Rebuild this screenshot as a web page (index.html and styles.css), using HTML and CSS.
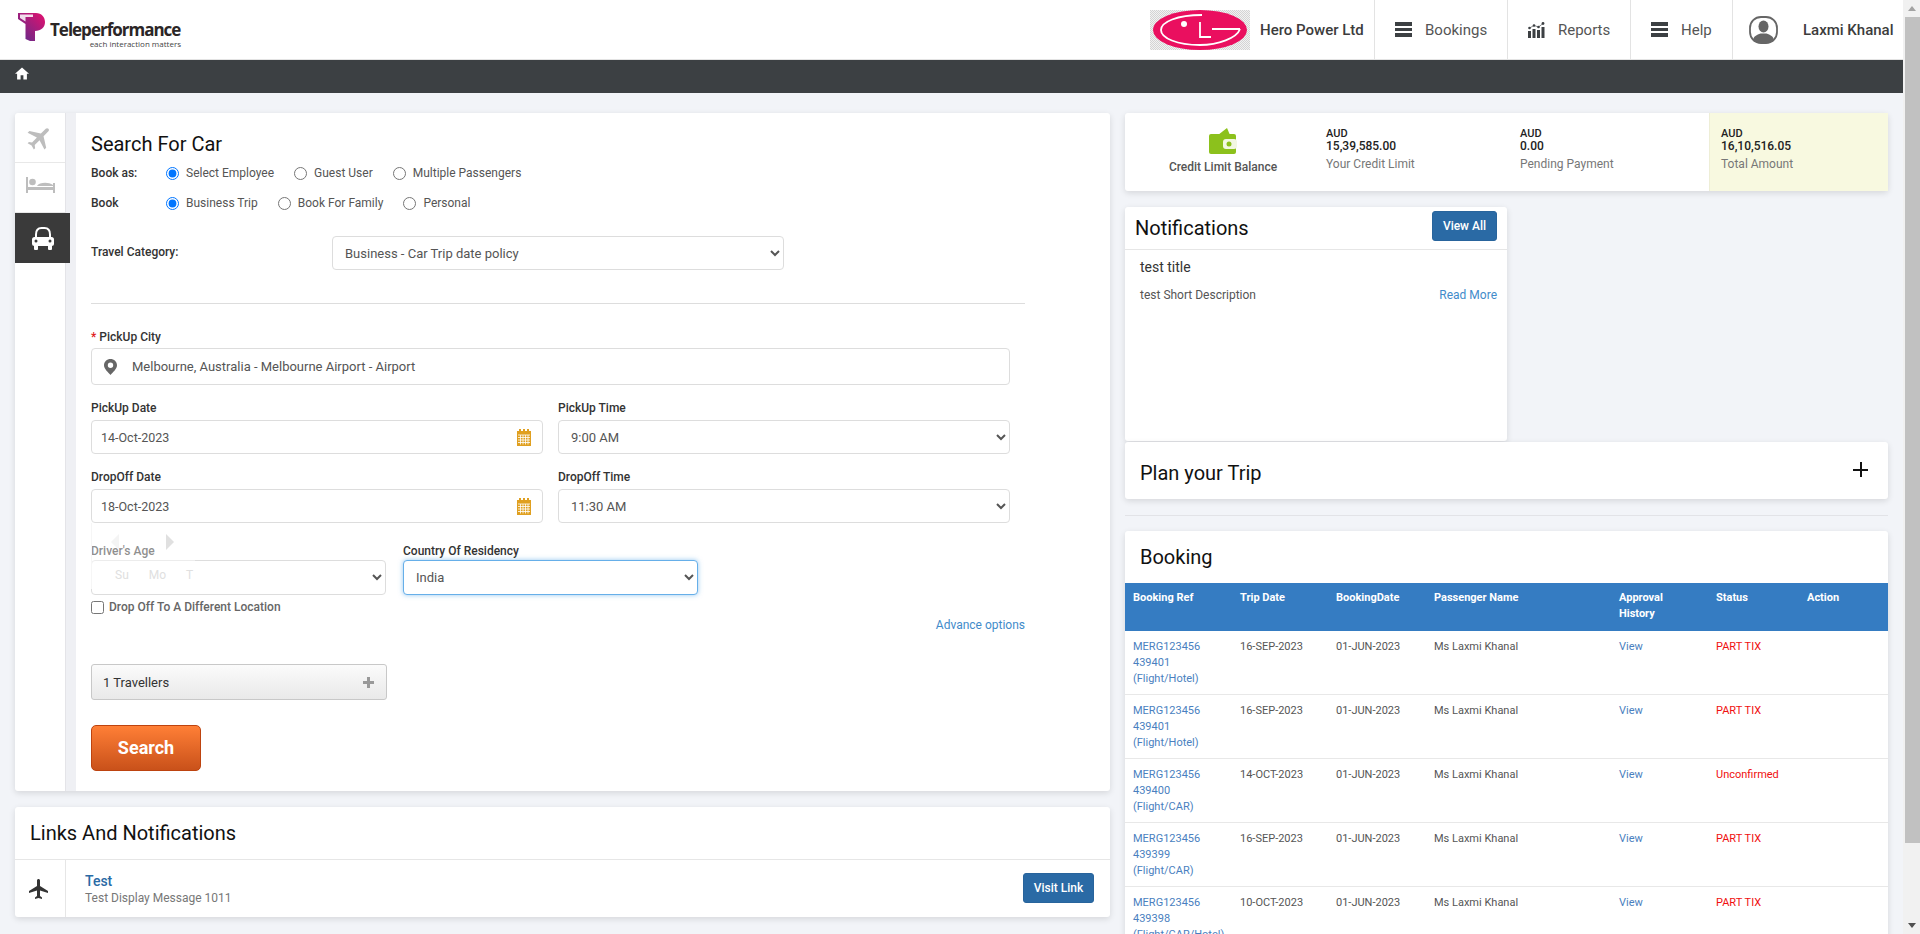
FILE: index.html
```html
<!DOCTYPE html>
<html lang="en">
<head>
    <meta charset="UTF-8">
    <title>Search For Car</title>
    <link rel="stylesheet" href="styles.css">
</head>
<body>
<div class="page">

    <header class="topbar">
        <div class="logo">
            <svg class="logo-mark" width="27" height="28" viewBox="0 0 27 28">
                <defs>
                    <linearGradient id="tpGrad" x1="0" y1="1" x2="1" y2="0">
                        <stop offset="0" stop-color="#5a2d8c"/>
                        <stop offset="1" stop-color="#e5106e"/>
                    </linearGradient>
                </defs>
                <path fill="url(#tpGrad)" d="M0 0H18C23.500 0 27 4 27 9C27 14.500 23 18 17 18V28H12L7.500 26V11L0 6Z"/>
                <path fill="#fff" d="M2 1.500H15V4H7.500V8.500L2 5Z" opacity="0.85"/>
            </svg>
            <div class="logo-text">
                <div class="logo-name">Teleperformance</div>
                <div class="logo-tag">each interaction matters</div>
            </div>
        </div>
        <div class="company">
            <svg class="lg-logo" width="100" height="40" viewBox="0 0 100 40">
                <defs>
                    <pattern id="dither" width="2" height="2" patternUnits="userSpaceOnUse">
                        <rect width="2" height="2" fill="#f2f2f2"/>
                        <rect width="1" height="1" fill="#d4d4d4"/>
                        <rect x="1" y="1" width="1" height="1" fill="#d4d4d4"/>
                    </pattern>
                </defs>
                <rect width="100" height="40" fill="url(#dither)"/>
                <ellipse cx="50" cy="20" rx="47" ry="20" fill="#ea0f5f"/>
                <path d="M90 19C87 28 68 35 50 35C27 35 11 28 11 20C11 12 27 5 52 5" fill="none" stroke="#fff" stroke-width="1.800"/>
                <circle cx="34" cy="14" r="3" fill="#fff"/>
                <path d="M50 12V27H61M62 19H90" fill="none" stroke="#fff" stroke-width="1.800"/>
            </svg>
            <span class="company-name">Hero Power Ltd</span>
        </div>
        <a class="nav-cell nav-bookings">
            <span class="bars"><i></i><i></i><i></i></span>
            <span>Bookings</span>
        </a>
        <a class="nav-cell nav-reports">
            <svg width="17" height="16" viewBox="0 0 17 16" fill="#3c4043">
                <rect x="0" y="9" width="3" height="7"/>
                <rect x="4.500" y="7" width="3" height="9"/>
                <rect x="9" y="8" width="3" height="8"/>
                <rect x="13.500" y="5" width="3" height="11"/>
                <circle cx="1.500" cy="6" r="1.300"/>
                <circle cx="6" cy="3.500" r="1.300"/>
                <circle cx="10.500" cy="5" r="1.300"/>
                <circle cx="15" cy="1.500" r="1.400"/>
                <path d="M1.500 6L6 3.500L10.500 5L15 1.500" fill="none" stroke="#3c4043" stroke-width="0.600"/>
            </svg>
            <span>Reports</span>
        </a>
        <a class="nav-cell nav-help">
            <span class="bars"><i></i><i></i><i></i></span>
            <span>Help</span>
        </a>
        <div class="user">
            <svg width="29" height="28" viewBox="0 0 29 28">
                <rect x="1" y="1" width="27" height="26" rx="11" fill="#fff" stroke="#666" stroke-width="1.800"/>
                <ellipse cx="14.500" cy="10.500" rx="5" ry="6" fill="#666"/>
                <path d="M4 25C4 20 8 19 11.500 17.500H17.500C21 19 25 20 25 25C21 27 8 27 4 25Z" fill="#666"/>
            </svg>
            <span class="user-name">Laxmi Khanal</span>
        </div>
    </header>

    <div class="crumbbar">
        <svg class="home-icon" width="14" height="13" viewBox="2 3 20 17" fill="#fff">
            <path d="M10 20v-6h4v6h5v-8h3L12 3 2 12h3v8z"/>
        </svg>
    </div>

    <main class="main">
        <div class="col-left">
            <section class="card search-card">
                <nav class="tabs">
                    <div class="tab">
                        <svg width="30" height="30" viewBox="0 0 24 24" fill="#bdbdbd">
                            <path transform="rotate(45 12 12)" d="M21 16v-2l-8-5V3.500c0-.83-.67-1.500-1.500-1.500S10 2.670 10 3.500V9l-8 5v2l8-2.500V19l-2 1.500V22l3.500-1 3.500 1v-1.500L13 19v-5.500l8 2.500z"/>
                        </svg>
                    </div>
                    <div class="tab tab-bed">
                        <svg width="29" height="16" viewBox="0 0 29 16" fill="#bdbdbd">
                            <rect x="0" y="0" width="2" height="16"/>
                            <rect x="27" y="6" width="2" height="10"/>
                            <rect x="0" y="10" width="29" height="3"/>
                            <circle cx="6.500" cy="5" r="3.300"/>
                            <path d="M11 9C13 5.500 22 4.500 27 8V9Z"/>
                        </svg>
                    </div>
                    <div class="tab tab-active">
                        <svg width="22" height="23" viewBox="0 0 22 23">
                            <path d="M4 11V7.500C4 3.500 6 1 9.500 1H12.500C16 1 18 3.500 18 7.500V11" fill="none" stroke="#fff" stroke-width="2"/>
                            <rect x="0" y="10" width="22" height="9" rx="2.500" fill="#fff"/>
                            <rect x="2" y="18" width="4" height="5" rx="1" fill="#fff"/>
                            <rect x="16" y="18" width="4" height="5" rx="1" fill="#fff"/>
                            <circle cx="4" cy="14" r="1.500" fill="#3a3a3a"/>
                            <circle cx="18" cy="14" r="1.500" fill="#3a3a3a"/>
                        </svg>
                    </div>
                </nav>
                <div class="tab-gutter"></div>

                <div class="search-form">
                    <h2 class="form-title">Search For Car</h2>

                    <div class="radio-row radio-row-first">
                        <span class="radio-label">Book as:</span>
                        <label class="radio radio-employee"><input type="radio" name="bookas" checked>Select Employee</label>
                        <label class="radio radio-guest"><input type="radio" name="bookas">Guest User</label>
                        <label class="radio"><input type="radio" name="bookas">Multiple Passengers</label>
                    </div>
                    <div class="radio-row">
                        <span class="radio-label">Book</span>
                        <label class="radio radio-trip"><input type="radio" name="book" checked>Business Trip</label>
                        <label class="radio radio-family"><input type="radio" name="book">Book For Family</label>
                        <label class="radio"><input type="radio" name="book">Personal</label>
                    </div>

                    <div class="category-row">
                        <span class="category-label">Travel Category:</span>
                        <select class="field category-select">
                            <option>Business - Car Trip date policy</option>
                        </select>
                    </div>

                    <hr class="form-rule">

                    <label class="field-label city-label"><span class="required">*</span> PickUp City</label>
                    <div class="field city-field">
                        <svg width="13" height="16" viewBox="0 0 13 16">
                            <path fill="#666" fill-rule="evenodd" d="M6.500 0C3 0 0 2.700 0 6.200C0 10 4.500 13.500 6.500 16C8.500 13.500 13 10 13 6.200C13 2.700 10 0 6.500 0ZM6.500 3.500A2.700 2.700 0 1 1 6.500 8.900A2.700 2.700 0 1 1 6.500 3.500Z"/>
                        </svg>
                        <span>Melbourne, Australia - Melbourne Airport - Airport</span>
                    </div>

                    <div class="date-grid">
                        <div>
                            <label class="field-label">PickUp Date</label>
                            <div class="field date-field">
                                <span>14-Oct-2023</span>
                                <svg width="14" height="17" viewBox="0 0 14 17">
                                    <path fill="#e0a020" d="M0 2H2V0H4V2H6V0H8V2H10V0H12V2H14V17H0Z"/>
                                    <path stroke="#fff" stroke-width="0.800" d="M1 6H13M1 8.500H13M1 11H13M1 13.500H13M3.500 6V15.500M6 6V15.500M8.500 6V15.500M11 6V15.500"/>
                                </svg>
                            </div>
                        </div>
                        <div>
                            <label class="field-label">PickUp Time</label>
                            <select class="field time-select"><option>9:00 AM</option></select>
                        </div>
                    </div>

                    <div class="date-grid date-grid-second">
                        <div>
                            <label class="field-label">DropOff Date</label>
                            <div class="field date-field">
                                <span>18-Oct-2023</span>
                                <svg width="14" height="17" viewBox="0 0 14 17">
                                    <path fill="#e0a020" d="M0 2H2V0H4V2H6V0H8V2H10V0H12V2H14V17H0Z"/>
                                    <path stroke="#fff" stroke-width="0.800" d="M1 6H13M1 8.500H13M1 11H13M1 13.500H13M3.500 6V15.500M6 6V15.500M8.500 6V15.500M11 6V15.500"/>
                                </svg>
                            </div>
                        </div>
                        <div>
                            <label class="field-label">DropOff Time</label>
                            <select class="field time-select"><option>11:30 AM</option></select>
                        </div>
                    </div>

                    <div class="driver-grid">
                        <div>
                            <label class="field-label">Driver's Age</label>
                            <select class="field driver-select"><option></option></select>
                        </div>
                        <div>
                            <label class="field-label">Country Of Residency</label>
                            <select class="field driver-select country-select"><option>India</option></select>
                        </div>
                    </div>

                    <!-- datepicker fading out over the driver's age field -->
                    <div class="ghost-picker">
                        <span class="ghost-arrow ghost-prev"></span>
                        <span class="ghost-arrow ghost-next"></span>
                        <div class="ghost-days"><span>Su</span><span>Mo</span><span>T</span></div>
                    </div>

                    <label class="check-row"><input type="checkbox">Drop Off To A Different Location</label>
                    <div class="advance"><a>Advance options</a></div>

                    <div class="travellers">
                        <span>1 Travellers</span>
                        <span class="travellers-plus"></span>
                    </div>
                    <button class="search-btn">Search</button>
                </div>
            </section>

            <section class="card links-card">
                <h2 class="links-title">Links And Notifications</h2>
                <div class="links-row">
                    <div class="links-icon">
                        <svg width="24" height="24" viewBox="0 0 24 24" fill="#333">
                            <path d="M21 16v-2l-8-5V3.500c0-.83-.67-1.500-1.500-1.500S10 2.670 10 3.500V9l-8 5v2l8-2.500V19l-2 1.500V22l3.500-1 3.500 1v-1.500L13 19v-5.500l8 2.500z"/>
                        </svg>
                    </div>
                    <div class="links-body">
                        <a class="links-name">Test</a>
                        <div class="links-sub">Test Display Message 1011</div>
                    </div>
                    <button class="btn-blue visit-btn">Visit Link</button>
                </div>
            </section>
        </div>

        <div class="col-right">
            <section class="card balance-card">
                <div class="balance-head">
                    <svg width="28" height="26" viewBox="0 0 28 26">
                        <path fill="#8cc11c" d="M9 7L18 0L21 7Z"/>
                        <rect x="0" y="6" width="27" height="20" rx="2" fill="#8cc11c"/>
                        <rect x="14" y="11" width="14" height="10" rx="3" fill="#f2f7e2"/>
                        <circle cx="20" cy="16" r="2.500" fill="#8cc11c"/>
                    </svg>
                    <span class="balance-title">Credit Limit Balance</span>
                </div>
                <div class="balance-item balance-limit">
                    <div class="currency">AUD</div>
                    <div class="amount">15,39,585.00</div>
                    <div class="amount-label">Your Credit Limit</div>
                </div>
                <div class="balance-item balance-pending">
                    <div class="currency">AUD</div>
                    <div class="amount">0.00</div>
                    <div class="amount-label">Pending Payment</div>
                </div>
                <div class="balance-item balance-total">
                    <div class="currency">AUD</div>
                    <div class="amount">16,10,516.05</div>
                    <div class="amount-label">Total Amount</div>
                </div>
            </section>

            <section class="card notice-card">
                <div class="notice-head">
                    <h2 class="notice-title">Notifications</h2>
                    <button class="btn-blue viewall-btn">View All</button>
                </div>
                <div class="notice-body">
                    <div class="notice-name">test title</div>
                    <div class="notice-line">
                        <span>test Short Description</span>
                        <a>Read More</a>
                    </div>
                </div>
            </section>

            <section class="card plan-card">
                <h2 class="plan-title">Plan your Trip</h2>
                <span class="plan-plus"></span>
            </section>

            <hr class="col-rule">

            <section class="card booking-card">
                <h2 class="booking-title">Booking</h2>
                <table class="booking-table">
                    <colgroup>
                        <col class="c-ref"><col class="c-trip"><col class="c-date"><col class="c-name"><col class="c-view"><col class="c-status"><col>
                    </colgroup>
                    <thead>
                        <tr>
                            <th>Booking Ref</th><th>Trip Date</th><th>BookingDate</th><th>Passenger Name</th><th>Approval History</th><th>Status</th><th>Action</th>
                        </tr>
                    </thead>
                    <tbody>
                        <tr>
                            <td><a>MERG123456<br>439401<br>(Flight/Hotel)</a></td><td>16-SEP-2023</td><td>01-JUN-2023</td><td>Ms Laxmi Khanal</td><td><a>View</a></td><td class="status">PART TIX</td><td></td>
                        </tr>
                        <tr>
                            <td><a>MERG123456<br>439401<br>(Flight/Hotel)</a></td><td>16-SEP-2023</td><td>01-JUN-2023</td><td>Ms Laxmi Khanal</td><td><a>View</a></td><td class="status">PART TIX</td><td></td>
                        </tr>
                        <tr>
                            <td><a>MERG123456<br>439400<br>(Flight/CAR)</a></td><td>14-OCT-2023</td><td>01-JUN-2023</td><td>Ms Laxmi Khanal</td><td><a>View</a></td><td class="status">Unconfirmed</td><td></td>
                        </tr>
                        <tr>
                            <td><a>MERG123456<br>439399<br>(Flight/CAR)</a></td><td>16-SEP-2023</td><td>01-JUN-2023</td><td>Ms Laxmi Khanal</td><td><a>View</a></td><td class="status">PART TIX</td><td></td>
                        </tr>
                        <tr>
                            <td><a>MERG123456<br>439398<br>(Flight/CAR/Hotel)</a></td><td>10-OCT-2023</td><td>01-JUN-2023</td><td>Ms Laxmi Khanal</td><td><a>View</a></td><td class="status">PART TIX</td><td></td>
                        </tr>
                    </tbody>
                </table>
            </section>
        </div>
    </main>
</div>

<div class="scrollbar">
    <span class="scroll-up"></span>
    <div class="scroll-thumb"></div>
    <span class="scroll-down"></span>
</div>
</body>
</html>
```

FILE: styles.css
```css
* {
    box-sizing: border-box;
}

html, body {
    margin: 0;
    height: 934px;
    overflow: hidden;
}

body {
    display: flex;
    font-family: Roboto, sans-serif;
    font-size: 12px;
    color: #555;
    background: #f2f4f8;
}

.page {
    width: 1903px;
    height: 934px;
    overflow: hidden;
}

/* top bar */
.topbar {
    display: flex;
    align-items: center;
    height: 60px;
    background: #fff;
    border-bottom: 1px solid #e3e3e3;
}

.logo {
    display: flex;
    align-items: flex-start;
    width: 1150px;
    height: 59px;
    padding: 13px 0 0 18px;
}

.logo-mark {
    flex: none;
}

.logo-text {
    margin: 8px 0 0 5px;
    width: 131px;
}

.logo-name {
    font-family: "Open Sans", sans-serif;
    font-weight: 700;
    font-size: 17px;
    line-height: 17px;
    letter-spacing: -1px;
    color: #2b2626;
    white-space: nowrap;
}

.logo-tag {
    margin-top: 1px;
    font-family: "Open Sans", sans-serif;
    font-size: 8px;
    line-height: 9px;
    text-align: right;
    color: #444;
    white-space: nowrap;
}

.company {
    display: flex;
    align-items: center;
    width: 224px;
}

.company-name {
    margin-left: 10px;
    font-size: 15px;
    font-weight: 500;
    color: #3c3c3c;
    white-space: nowrap;
}

.nav-cell {
    display: flex;
    align-items: center;
    height: 59px;
    gap: 13px;
    border-left: 1px solid #e3e3e3;
    font-size: 15px;
    color: #555;
}

.nav-bookings {
    width: 133px;
    padding-left: 20px;
}

.nav-reports {
    width: 123px;
    padding-left: 20px;
}

.nav-help {
    width: 102px;
    padding-left: 20px;
}

.bars {
    display: flex;
    flex-direction: column;
    gap: 2px;
    width: 17px;
}

.bars i {
    display: block;
    height: 3.500px;
    background: #3c4043;
}

.user {
    display: flex;
    align-items: center;
    flex: 1;
    height: 59px;
    padding-left: 16px;
    border-left: 1px solid #e3e3e3;
}

.user-name {
    margin-left: 25px;
    font-size: 15px;
    font-weight: 500;
    color: #3c3c3c;
    white-space: nowrap;
}

.crumbbar {
    display: flex;
    align-items: center;
    height: 33px;
    padding: 0 0 6px 15px;
    background: #3c4043;
}

/* columns */
.main {
    display: flex;
    gap: 15px;
    padding: 20px 15px 0;
}

.col-left {
    flex: none;
    width: 1095px;
}

.col-right {
    flex: none;
    width: 763px;
}

.card {
    background: #fff;
    border-radius: 3px;
    box-shadow: 0 2px 6px rgba(0, 0, 0, 0.12);
}

/* search card */
.search-card {
    display: flex;
    height: 678px;
}

.tabs {
    flex: none;
    width: 50px;
}

.tab {
    display: flex;
    align-items: center;
    justify-content: center;
    height: 50px;
    border-bottom: 1px solid #e8e8e8;
}

.tab-bed {
    padding-bottom: 6px;
}

.tab-active {
    width: 55px;
    background: #3a3a3a;
    border-bottom: none;
    position: relative;
}

.tab-gutter {
    flex: none;
    width: 11px;
    background: #eff0f4;
    border-left: 1px solid #e4e4e8;
}

.search-form {
    position: relative;
    flex: 1;
    padding: 19px 0 0 15px;
}

.form-title {
    margin: 0;
    font-size: 20px;
    font-weight: 400;
    line-height: 24px;
    color: #111;
}

.radio-row {
    display: flex;
    align-items: center;
    height: 20px;
    margin-top: 10px;
}

.radio-row-first {
    margin-top: 7px;
}

.radio-label {
    width: 75px;
    font-weight: 500;
    color: #333;
}

.radio {
    display: flex;
    align-items: center;
    margin-right: 20px;
}

.radio input {
    width: 13px;
    height: 13px;
    margin: 0 7px 0 0;
}

.category-row {
    display: flex;
    align-items: center;
    margin-top: 23px;
}

.category-label {
    width: 241px;
    font-weight: 500;
    color: #333;
    margin-top: -3px;
}

.field {
    display: block;
    border: 1px solid #ddd;
    border-radius: 4px;
    background: #fff;
    font-family: Roboto, sans-serif;
    font-size: 13px;
    color: #555;
}

select.field {
    padding: 0 8px;
    outline: none;
}

.category-select {
    width: 452px;
    height: 34px;
}

.form-rule {
    width: 934px;
    height: 1px;
    margin: 33px 0 0;
    border: none;
    background: #ddd;
}

.field-label {
    display: block;
    font-weight: 500;
    line-height: 14px;
    color: #333;
}

.city-label {
    margin-top: 26px;
}

.required {
    color: #e02020;
}

.city-field {
    display: flex;
    align-items: center;
    gap: 15px;
    width: 919px;
    height: 37px;
    margin-top: 4px;
    padding-left: 12px;
}

.date-grid {
    display: grid;
    grid-template-columns: 452px 452px;
    gap: 15px;
    margin-top: 16px;
}

.date-grid-second {
    margin-top: 16px;
}

.date-field {
    display: flex;
    align-items: center;
    justify-content: space-between;
    height: 34px;
    margin-top: 5px;
    padding: 0 11px 0 9px;
    font-size: 12.500px;
}

.time-select {
    width: 100%;
    height: 34px;
    margin-top: 5px;
}

.driver-grid {
    display: grid;
    grid-template-columns: 295px 295px;
    gap: 17px;
    margin-top: 21px;
}

.driver-select {
    width: 100%;
    height: 35px;
    margin-top: 2px;
}

.country-select {
    border-color: #66afe9;
    box-shadow: 0 0 5px rgba(102, 175, 233, 0.7);
}

.ghost-picker {
    position: absolute;
    left: 15px;
    top: 410px;
    width: 104px;
    height: 66px;
    background: rgba(255, 255, 255, 0.45);
    border-left: 1px solid #f6f6f6;
}

.ghost-arrow {
    position: absolute;
    top: 11px;
    width: 0;
    height: 0;
    border-top: 8px solid transparent;
    border-bottom: 8px solid transparent;
}

.ghost-prev {
    left: 19px;
    border-right: 8px solid #f4f4f4;
}

.ghost-next {
    left: 74px;
    border-left: 8px solid #e0e0e0;
}

.ghost-days {
    position: absolute;
    top: 45px;
    left: 23px;
    display: flex;
    gap: 20px;
    font-size: 12px;
    line-height: 14px;
    color: #e0e0e0;
}

.check-row {
    display: flex;
    align-items: center;
    height: 14px;
    margin-top: 5px;
    font-weight: 500;
    color: #666;
}

.check-row input {
    width: 13px;
    height: 13px;
    margin: 0 5px 0 0;
}

.advance {
    width: 934px;
    margin-top: 4px;
    line-height: 14px;
    text-align: right;
}

a {
    color: #428bca;
}

.travellers {
    display: flex;
    align-items: center;
    justify-content: space-between;
    width: 296px;
    height: 36px;
    margin-top: 32px;
    padding: 0 12px 0 11px;
    border: 1px solid #c8c8c8;
    border-radius: 3px;
    background: linear-gradient(#fbfbfb, #e9e9e9);
    font-size: 13px;
    color: #333;
}

.travellers-plus {
    position: relative;
    width: 11px;
    height: 11px;
    background: linear-gradient(#999, #999) center / 11px 3px no-repeat,
                linear-gradient(#999, #999) center / 3px 11px no-repeat;
}

.search-btn {
    display: block;
    width: 110px;
    height: 46px;
    margin-top: 25px;
    padding-bottom: 2px;
    border: 1px solid #bd430f;
    border-radius: 5px;
    background: linear-gradient(#ff7f36, #c9511a);
    font-family: Roboto, sans-serif;
    font-size: 18px;
    font-weight: 700;
    color: #fff;
}

/* links card */
.links-card {
    height: 110px;
    margin-top: 16px;
}

.links-title {
    height: 53px;
    margin: 0;
    padding-left: 15px;
    border-bottom: 1px solid #e6e6e6;
    font-size: 20px;
    font-weight: 400;
    line-height: 52px;
    color: #111;
}

.links-row {
    display: flex;
    align-items: center;
    height: 57px;
}

.links-icon {
    display: flex;
    align-items: center;
    justify-content: center;
    width: 51px;
    height: 57px;
    padding-right: 2px;
    border-right: 1px solid #e6e6e6;
}

.links-body {
    flex: 1;
    padding-left: 19px;
}

.links-name {
    display: block;
    font-size: 14px;
    font-weight: 500;
    line-height: 18px;
    color: #2a6aa5;
}

.links-sub {
    font-size: 12px;
    line-height: 16px;
    color: #777;
}

.btn-blue {
    border: 1px solid #28649c;
    border-radius: 3px;
    background: #2a6aa5;
    font-family: Roboto, sans-serif;
    font-size: 12px;
    font-weight: 500;
    color: #fff;
}

.visit-btn {
    width: 71px;
    height: 30px;
    margin-right: 16px;
    position: relative;
    top: -1px;
}

/* balance card */
.balance-card {
    display: flex;
    height: 78px;
}

.balance-head {
    display: flex;
    flex-direction: column;
    align-items: center;
    width: 196px;
    padding: 15px 0 0 0;
}

.balance-title {
    margin-top: 6px;
    font-weight: 500;
    color: #555;
    line-height: 14px;
}

.balance-item {
    padding-top: 15px;
}

.balance-limit {
    width: 199px;
    padding-left: 5px;
}

.balance-pending {
    width: 189px;
}

.balance-total {
    flex: 1;
    padding-left: 11px;
    background: #f8f9e0;
    border-left: 1px solid #eeeed6;
}

.currency {
    font-size: 11px;
    font-weight: 500;
    line-height: 12px;
    color: #222;
}

.amount {
    font-size: 12px;
    font-weight: 500;
    line-height: 12px;
    color: #222;
}

.amount-label {
    margin-top: 5px;
    font-size: 12px;
    line-height: 14px;
    color: #777;
}

/* notifications card */
.notice-card {
    width: 382px;
    height: 234px;
    margin-top: 16px;
}

.notice-head {
    display: flex;
    align-items: flex-start;
    justify-content: space-between;
    height: 43px;
    padding: 4px 10px 0 10px;
    border-bottom: 1px solid #e6e6e6;
}

.notice-title {
    margin: 5px 0 0;
    font-size: 20px;
    font-weight: 400;
    line-height: 24px;
    color: #111;
}

.viewall-btn {
    width: 65px;
    height: 30px;
}

.notice-body {
    padding: 8px 10px 0 15px;
}

.notice-name {
    font-size: 14px;
    line-height: 18px;
    color: #333;
}

.notice-line {
    display: flex;
    justify-content: space-between;
    margin-top: 12px;
    line-height: 14px;
}

.plan-card {
    display: flex;
    justify-content: space-between;
    height: 57px;
    margin-top: 1px;
    padding: 0 20px 0 15px;
}

.plan-title {
    margin: 19px 0 0;
    font-size: 20px;
    font-weight: 400;
    line-height: 24px;
    color: #111;
}

.plan-plus {
    width: 15px;
    height: 15px;
    margin-top: 20px;
    background: linear-gradient(#111, #111) center / 15px 2px no-repeat,
                linear-gradient(#111, #111) center / 2px 15px no-repeat;
}

.col-rule {
    height: 1px;
    margin: 16px 0 15px;
    border: none;
    background: #e2e3e7;
}

/* booking table */
.booking-title {
    height: 52px;
    margin: 0;
    padding-left: 15px;
    font-size: 20px;
    font-weight: 400;
    line-height: 52px;
    color: #111;
}

.booking-table {
    width: 100%;
    table-layout: fixed;
    border-collapse: collapse;
}

.c-ref { width: 107px; }
.c-trip { width: 96px; }
.c-date { width: 98px; }
.c-name { width: 185px; }
.c-view { width: 97px; }
.c-status { width: 91px; }

.booking-table th {
    height: 48px;
    padding: 7px 8px 0;
    vertical-align: top;
    background: #357cc2;
    font-size: 11px;
    font-weight: 700;
    line-height: 16px;
    text-align: left;
    color: #fff;
}

.booking-table td {
    padding: 8px 8px 7px;
    vertical-align: top;
    border-bottom: 1px solid #e8e8e8;
    font-size: 11px;
    line-height: 16px;
    color: #555;
}

.booking-table td a {
    color: #4a7fc0;
}

.booking-table td.status {
    color: #f01010;
}

/* scrollbar, page itself is fixed to the window */
.scrollbar {
    position: relative;
    flex: none;
    width: 17px;
    height: 934px;
    padding: 17px 0 0 2px;
    background: #f1f1f1;
}

.scroll-thumb {
    width: 15px;
    height: 826px;
    background: #c1c1c1;
}

.scroll-up,
.scroll-down {
    position: absolute;
    left: 5px;
    width: 0;
    height: 0;
    border-left: 4px solid transparent;
    border-right: 4px solid transparent;
}

.scroll-up {
    top: 6px;
    border-bottom: 5px solid #a3a3a3;
}

.scroll-down {
    bottom: 6px;
    border-top: 5px solid #505050;
}
```
